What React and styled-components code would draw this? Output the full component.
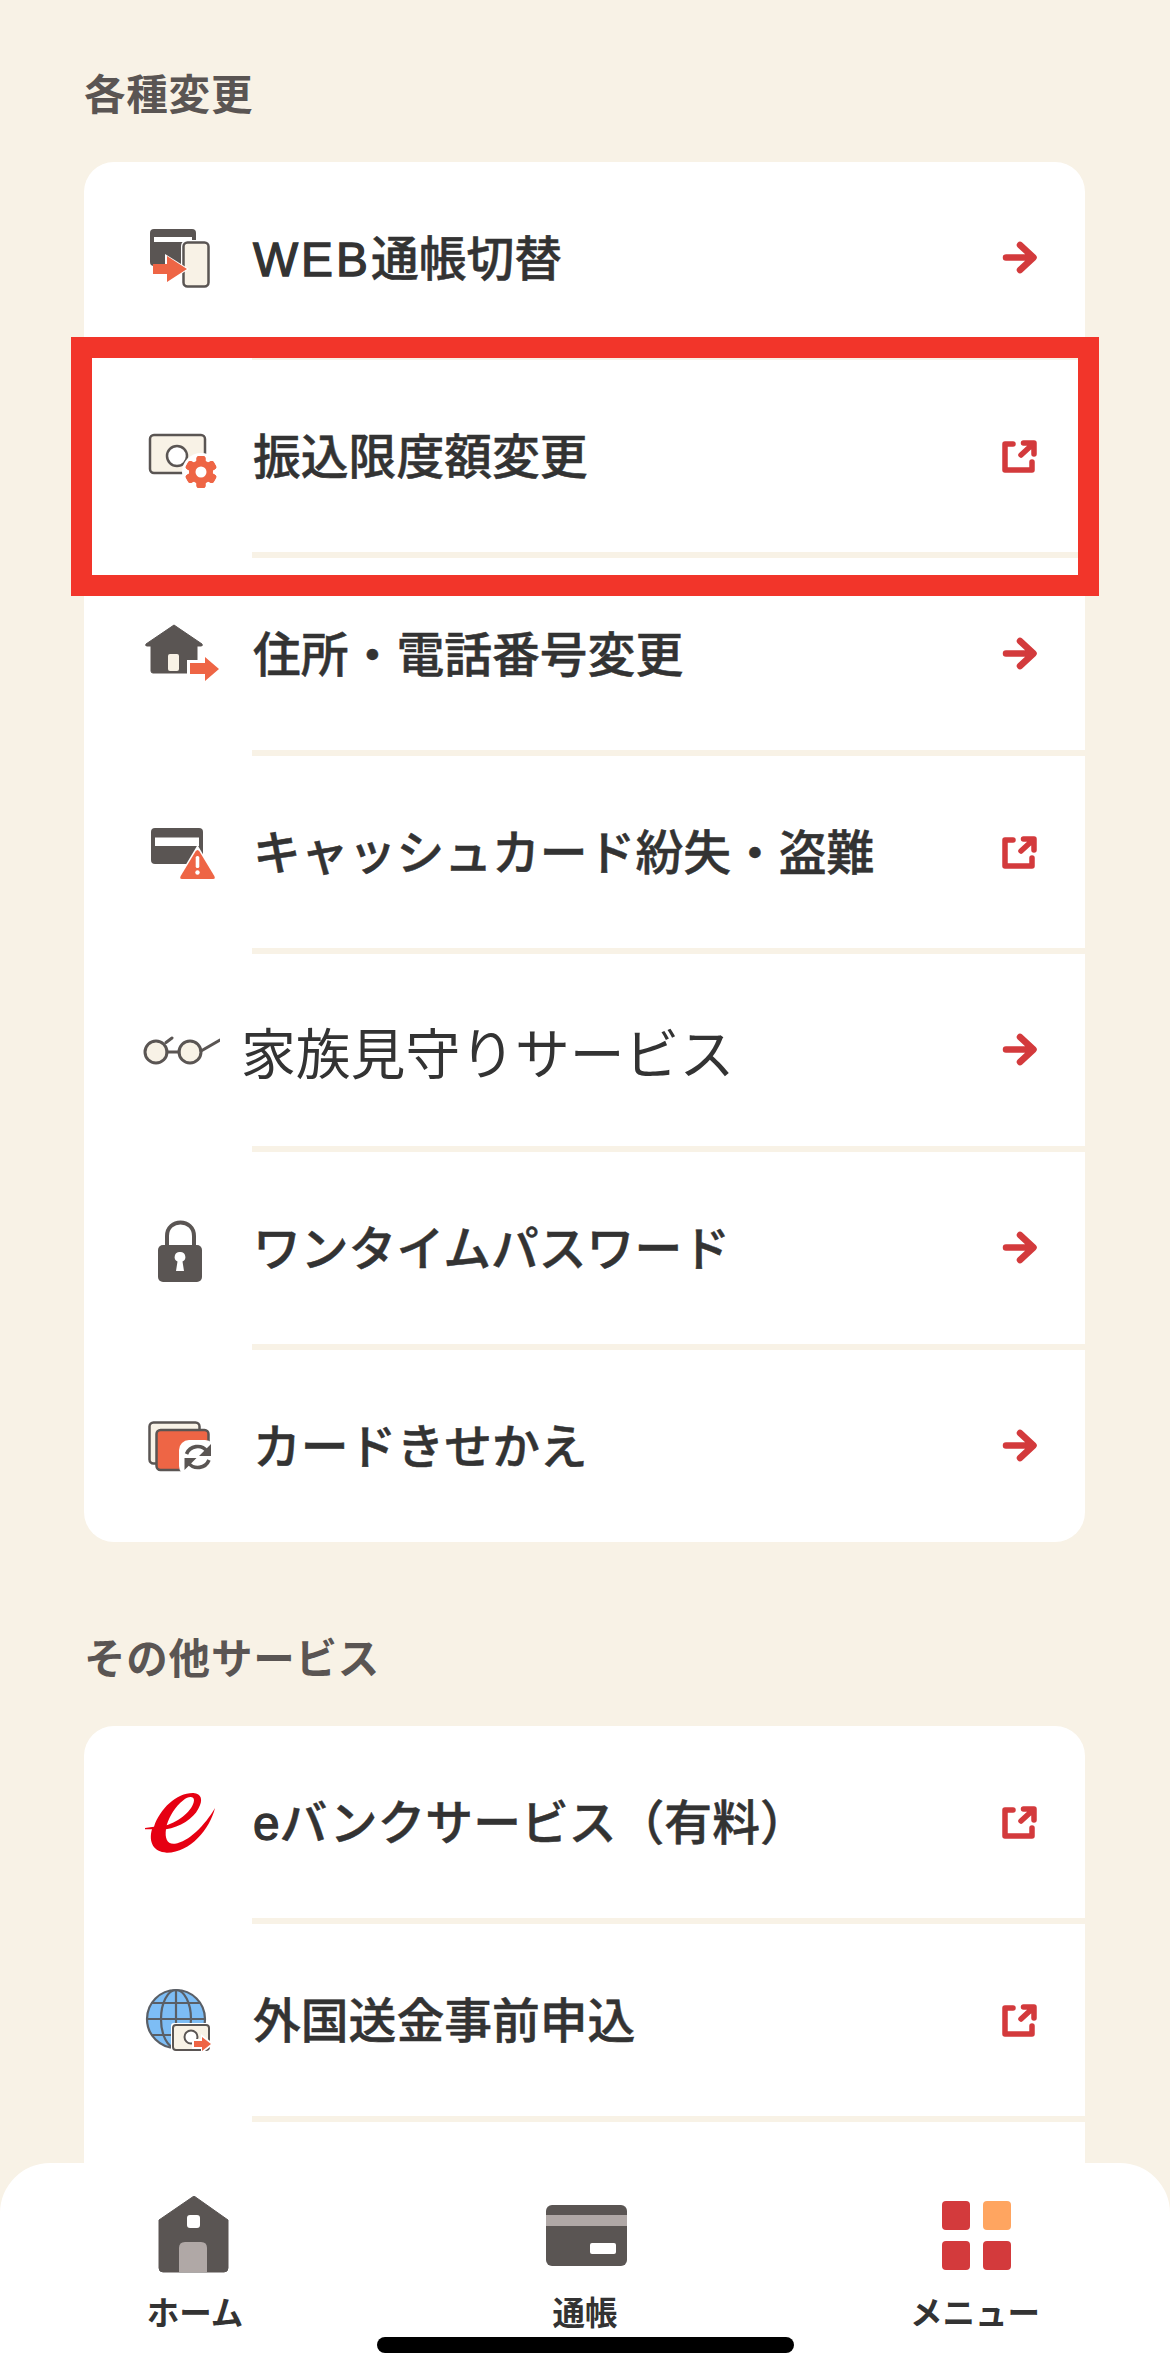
import React from 'react';
import styled, {createGlobalStyle} from 'styled-components';

const INK = '#5a5553';
const CREAM = '#f8f2e6';
const ORANGE = '#ee6545';
const RED = '#d33a3c';

const Global = createGlobalStyle`
    html, body {
        margin: 0;
        padding: 0;
        background: ${CREAM};
    }
    * {
        box-sizing: border-box;
    }
`;

const Page = styled.div`
    position: relative;
    width: 1170px;
    height: 2377px;
    overflow: hidden;
    padding: 67px 85px 0 84px;
    background: ${CREAM};
    font-family: "Noto Sans CJK JP", "Liberation Sans", sans-serif;
`;

const SectionTitle = styled.h2`
    margin: ${props => props.$first ? '0' : '89px'} 0 39px 0;
    height: 56px;
    line-height: 50px;
    font-size: 41.5px;
    font-weight: 700;
    letter-spacing: 0.8px;
    color: ${INK};
`;

const Card = styled.div`
    background: #fff;
    border-radius: 30px;
`;

const Row = styled.div`
    position: relative;
    display: flex;
    align-items: center;
    height: 192px;
    padding: 0 45px 0 56px;
`;

const IconBox = styled.svg`
    flex: none;
    width: 80px;
    height: 80px;
`;

const Label = styled.span`
    flex: 1;
    margin-left: ${props => props.$large ? '21px' : '33px'};
    padding-bottom: ${props => props.$large ? '0' : '5px'};
    font-size: ${props => props.$large ? '54.8px' : '47.8px'};
    font-weight: ${props => props.$large ? 400 : 500};
    -webkit-text-stroke: ${props => props.$large ? '0' : '0.5px'} #333;
    color: #333;
    white-space: nowrap;
`;

const Latin = styled.span`
    font-family: "Liberation Sans", sans-serif;
    letter-spacing: ${props => props.$wide ? '3px' : '0'};
    -webkit-text-stroke: 1.3px #333;
`;

const EndIcon = styled.svg`
    flex: none;
    width: 40px;
    height: 40px;
    fill: none;
    stroke: ${RED};
    stroke-linecap: round;
    stroke-linejoin: round;
`;

const Divider = styled.div`
    height: 6px;
    margin-left: 168px;
    background: ${CREAM};
`;

const Highlight = styled.div`
    position: absolute;
    top: -23px;
    left: -13px;
    right: -14px;
    bottom: -44px;
    border: 21px solid #f2352a;
    z-index: 1;
`;

const BottomBar = styled.nav`
    position: absolute;
    left: 0;
    right: 0;
    bottom: 0;
    height: 214px;
    padding-top: 33px;
    display: grid;
    grid-template-columns: repeat(3, 1fr);
    background: #fff;
    border-radius: 50px 50px 0 0;
    z-index: 2;
`;

const NavItem = styled.div`
    display: flex;
    flex-direction: column;
    align-items: center;
`;

const NavIcon = styled.svg`
    width: 100px;
    height: 80px;
`;

const NavLabel = styled.span`
    margin-top: 15px;
    line-height: 40px;
    font-size: 32.5px;
    font-weight: 700;
    color: #333;
`;

const HomeIndicator = styled.div`
    position: absolute;
    left: 377px;
    bottom: 24px;
    width: 417px;
    height: 16px;
    border-radius: 8px;
    background: #000;
    z-index: 3;
`;

const Arrow = () => (
    <EndIcon viewBox="0 0 40 40" strokeWidth="6.5">
        <path d="M6 19.5H33M20 7L33.5 19.5L20 32"/>
    </EndIcon>
);

const External = () => (
    <EndIcon viewBox="0 0 40 40" strokeWidth="5.5">
        <path d="M13 8H5V34H32V26M21 19L33 8M23.5 7H34V18"/>
    </EndIcon>
);

const CardSwitchIcon = () => (
    <IconBox viewBox="0 0 80 80">
        <rect x="10" y="11" width="46" height="37" rx="4" fill={INK}/>
        <rect x="14" y="19" width="38" height="5" fill="#fff"/>
        <rect x="41" y="22" width="30" height="49" rx="6" fill="#fff"/>
        <rect x="43.5" y="24.5" width="25" height="44" rx="4" fill={CREAM} stroke={INK} strokeWidth="2.5"/>
        <path d="M25 36L49 51L25 66Z" fill="#fff"/>
        <path d="M13 46H27V38L47 51L27 64V56H13Z" fill={ORANGE}/>
    </IconBox>
);

const Gear = ({x, y}) => (
    <g transform={`translate(${x} ${y})`}>
        <circle r="19" fill="#fff"/>
        {[0, 60, 120, 180, 240, 300].map(a => (
            <rect key={a} x="-4.5" y="-16" width="9" height="32" rx="2.5" fill={ORANGE} transform={`rotate(${a})`}/>
        ))}
        <circle r="12" fill={ORANGE}/>
        <circle r="5.5" fill="#fff"/>
    </g>
);

const LimitIcon = () => (
    <IconBox viewBox="0 0 80 80">
        <rect x="10" y="19" width="55" height="38" rx="4" fill={CREAM} stroke={INK} strokeWidth="2.5"/>
        <circle cx="37" cy="40" r="10" fill="#fff" stroke={INK} strokeWidth="2.5"/>
        <Gear x={61} y={56}/>
    </IconBox>
);

const HouseIcon = () => (
    <IconBox viewBox="0 0 80 80">
        <path d="M34 11L62 30Q63 32 61 32H57V57Q57 59 55 59H13Q11 59 11 57V32H7Q5 32 6 30Z" fill={INK} stroke={INK} strokeLinejoin="round"/>
        <rect x="28" y="40" width="11" height="17" rx="2" fill={CREAM}/>
        <path d="M47 46H62V37L83 54L62 71V63H47Z" fill="#fff"/>
        <path d="M50 49H65V43L79 55L65 67V60H50Z" fill={ORANGE}/>
    </IconBox>
);

const CardAlertIcon = () => (
    <IconBox viewBox="0 0 80 80">
        <rect x="11" y="16" width="52" height="36" rx="4" fill={INK}/>
        <rect x="15" y="25.5" width="44" height="8.5" fill="#fff"/>
        <path d="M57.5 33L80 71H35Z" fill="#fff"/>
        <path d="M55.5 39.5Q57.5 36.5 59.5 39.5L74 63.5Q76 67 73 67H42Q39 67 41 63.5Z" fill={ORANGE}/>
        <rect x="55.7" y="44" width="3.6" height="12" rx="1.6" fill="#fff"/>
        <circle cx="57.5" cy="60.5" r="2.2" fill="#fff"/>
    </IconBox>
);

const GlassesIcon = () => (
    <IconBox viewBox="0 0 80 80">
        <g fill={CREAM} stroke={INK} strokeWidth="3" strokeLinecap="round">
            <circle cx="16" cy="42" r="11"/>
            <circle cx="50" cy="42" r="11"/>
            <path d="M27 42H39M26 32.5L32 28M61 41L80 30" fill="none"/>
        </g>
    </IconBox>
);

const LockIcon = () => (
    <IconBox viewBox="0 0 80 80">
        <path d="M27 38V28C27 10 54 10 54 28V38" fill="none" stroke={INK} strokeWidth="4"/>
        <rect x="18" y="37" width="44" height="37" rx="5" fill={INK}/>
        <path d="M40 44A5 5 0 0 1 42.5 53.5L44 63H36L37.5 53.5A5 5 0 0 1 40 44Z" fill="#fff"/>
    </IconBox>
);

const CardSkinIcon = () => (
    <IconBox viewBox="0 0 80 80">
        <rect x="9.5" y="16.5" width="50" height="41" rx="4" fill={CREAM} stroke={INK} strokeWidth="2.5"/>
        <rect x="16.5" y="24" width="52" height="40" rx="4" fill={ORANGE} stroke={INK} strokeWidth="2.5"/>
        <rect x="39" y="34" width="36" height="36" rx="10" fill="#fff"/>
        <g fill="none" stroke={INK} strokeWidth="3.6">
            <path d="M46.5 48A12 12 0 0 1 67 45M69 54A12 12 0 0 1 48.5 57"/>
        </g>
        <path d="M71 38V50H59ZM44.5 64V52H56.5Z" fill={INK}/>
    </IconBox>
);

const EBankIcon = () => (
    <IconBox viewBox="0 0 80 80">
        <g transform="translate(-10 -10) scale(0.3333)">
            <path fillRule="evenodd" fill="#e60012"
                  d="M45 168L72 164C90 110 140 62 190 63C215 64 220 85 205 110C190 140 150 165 108 172C104 200 112 218 135 215C175 210 225 160 255 108C240 170 180 243 110 242C70 240 55 210 66 172L45 172ZM110 160C145 150 190 115 192 85C192 72 175 72 160 85C135 105 120 130 110 160Z"/>
        </g>
    </IconBox>
);

const GlobeIcon = () => (
    <IconBox viewBox="0 0 80 80">
        <g fill="none" stroke="#5a5f66" strokeWidth="2.2">
            <circle cx="36" cy="39" r="29" fill="#7dbdf5"/>
            <ellipse cx="36" cy="39" rx="15" ry="29"/>
            <path d="M36 10V68M7 39H65M12 23H60M12 55H60"/>
        </g>
        <rect x="31" y="43" width="41" height="29" rx="3" fill="#fff"/>
        <rect x="33" y="45" width="36" height="25" rx="3" fill={CREAM} stroke={INK} strokeWidth="2"/>
        <circle cx="51" cy="57" r="6.5" fill="#fff" stroke={INK} strokeWidth="2"/>
        <path d="M52 59H61V54L74 64L61 74V69H52Z" fill="#fff"/>
        <path d="M54 61H62V57L71 64L62 71V67H54Z" fill={ORANGE}/>
    </IconBox>
);

const HomeNavIcon = () => (
    <NavIcon viewBox="0 0 100 80">
        <path d="M49 0L83 24V72Q83 76 79 76H18Q14 76 14 72V24Z" fill={INK} stroke={INK} strokeLinejoin="round"/>
        <rect x="42" y="19" width="13" height="13" rx="3" fill="#fff"/>
        <path d="M34 76V52Q34 46 40 46H56Q62 46 62 52V76Z" fill="#b0a8a6"/>
    </NavIcon>
);

const PassbookNavIcon = () => (
    <NavIcon viewBox="0 0 100 80">
        <rect x="11" y="9" width="81" height="61" rx="6" fill={INK}/>
        <rect x="11" y="19" width="81" height="11" fill="#b0a8a6"/>
        <rect x="55" y="47" width="26" height="11" rx="2" fill="#fff"/>
    </NavIcon>
);

const MenuNavIcon = () => (
    <NavIcon viewBox="0 0 100 80">
        <rect x="17" y="5" width="28" height="29" rx="4" fill={RED}/>
        <rect x="58" y="5" width="28" height="29" rx="4" fill="#ffa560"/>
        <rect x="17" y="45" width="28" height="29" rx="4" fill={RED}/>
        <rect x="58" y="45" width="28" height="29" rx="4" fill={RED}/>
    </NavIcon>
);

const settings = [
    {icon: CardSwitchIcon, latin: 'WEB', wide: true, text: '通帳切替'},
    {icon: LimitIcon, text: '振込限度額変更', external: true, marked: true},
    {icon: HouseIcon, text: '住所・電話番号変更'},
    {icon: CardAlertIcon, text: 'キャッシュカード紛失・盗難', external: true},
    {icon: GlassesIcon, text: '家族見守りサービス', large: true},
    {icon: LockIcon, text: 'ワンタイムパスワード'},
    {icon: CardSkinIcon, text: 'カードきせかえ'},
];

const others = [
    {icon: EBankIcon, latin: 'e', text: 'バンクサービス（有料）', external: true},
    {icon: GlobeIcon, text: '外国送金事前申込', external: true},
];

const MenuRow = ({item}) => {
    const Icon = item.icon;
    return (
        <Row>
            <Icon/>
            <Label $large={item.large}>
                {item.latin && <Latin $wide={item.wide}>{item.latin}</Latin>}
                {item.text}
            </Label>
            {item.external ? <External/> : <Arrow/>}
            {item.marked && <Highlight/>}
        </Row>
    );
};

const App = () => (
    <Page>
        <Global/>
        <SectionTitle $first>各種変更</SectionTitle>
        <Card>
            {settings.map((item, i) => (
                <React.Fragment key={item.text}>
                    <MenuRow item={item}/>
                    {i < settings.length - 1 && <Divider/>}
                </React.Fragment>
            ))}
        </Card>
        <SectionTitle>その他サービス</SectionTitle>
        <Card>
            {others.map(item => (
                <React.Fragment key={item.text}>
                    <MenuRow item={item}/>
                    <Divider/>
                </React.Fragment>
            ))}
            <Row/>
        </Card>
        <BottomBar>
            <NavItem>
                <HomeNavIcon/>
                <NavLabel>ホーム</NavLabel>
            </NavItem>
            <NavItem>
                <PassbookNavIcon/>
                <NavLabel>通帳</NavLabel>
            </NavItem>
            <NavItem>
                <MenuNavIcon/>
                <NavLabel>メニュー</NavLabel>
            </NavItem>
        </BottomBar>
        <HomeIndicator/>
    </Page>
);

export default App;
